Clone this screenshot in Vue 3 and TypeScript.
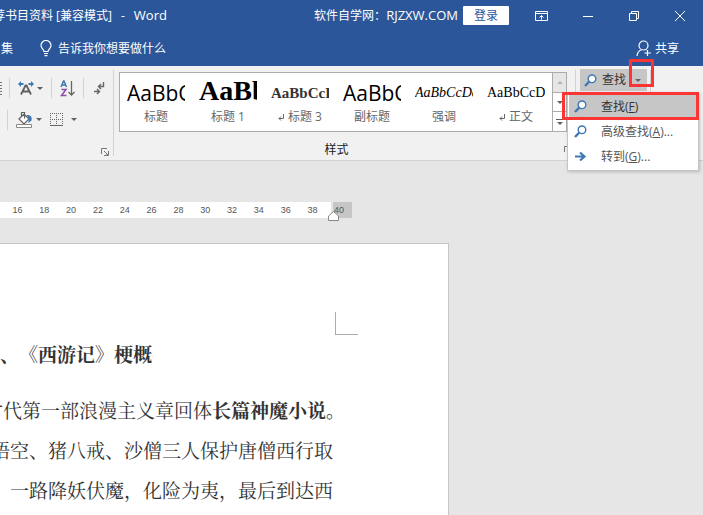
<script setup lang="ts">
interface StyleItem {
  sample: string
  label: string
  kind: string
  linked?: boolean
}

const styleItems: StyleItem[] = [
  { sample: 'AaBbC', label: '标题', kind: 'title' },
  { sample: 'AaBb', label: '标题 1', kind: 'heading1' },
  { sample: 'AaBbCcD', label: '标题 3', kind: 'heading3', linked: true },
  { sample: 'AaBbC', label: '副标题', kind: 'title' },
  { sample: 'AaBbCcDd', label: '强调', kind: 'emphasis' },
  { sample: 'AaBbCcDd', label: '正文', kind: 'normal', linked: true },
]

const rulerMarks: number[] = Array.from({ length: 12 }, (_, i) => 16 + i * 2)

const menuItems = [
  { text: '查找', key: 'F', tail: '', icon: 'search', active: true },
  { text: '高级查找', key: 'A', tail: '...', icon: 'search', active: false },
  { text: '转到', key: 'G', tail: '...', icon: 'arrow', active: false },
]
</script>

<template>
  <div class="word">
    <header class="titlebar">
      <div class="doc-title">
        <span>荐书目资料 [兼容模式]</span><span>-</span><span class="latin">Word</span>
      </div>
      <span class="brand">软件自学网：<span class="latin">RJZXW.COM</span></span>
      <button class="login" type="button">登录</button>
      <div class="window-buttons">
        <button type="button" aria-label="功能区显示选项">
          <svg width="14" height="12" viewBox="0 0 14 12" fill="none" stroke="#fff">
            <path d="M.5 1.500h12v9H.5zM.5 3.500h12M6.500 9.500v-4M4.500 7.500l2-2 2 2" />
          </svg>
        </button>
        <button type="button" aria-label="最小化">
          <svg width="12" height="12" viewBox="0 0 12 12" stroke="#fff"><path d="M1 6.500h10" /></svg>
        </button>
        <button type="button" aria-label="还原">
          <svg width="12" height="12" viewBox="0 0 12 12" fill="none" stroke="#fff">
            <path d="M1.500 3.500h7v7h-7zM3.500 3.500v-2h7v7h-2" />
          </svg>
        </button>
        <button type="button" aria-label="关闭">
          <svg width="12" height="12" viewBox="0 0 12 12" stroke="#fff"><path d="M1 1l10 10M11 1L1 11" /></svg>
        </button>
      </div>
    </header>

    <nav class="tabs">
      <a class="tab" href="#">集</a>
      <button class="tell" type="button">
        <svg width="12" height="17" viewBox="0 0 12 17" fill="none" stroke="#fff" stroke-width="1.2">
          <path d="M4 11.500C4 9.500 1 8.500 1 5.500a5 5 0 0 1 10 0c0 3-3 4-3 6zM4 13.500h4M4.500 15.600h3" />
        </svg>
        <span>告诉我你想要做什么</span>
      </button>
      <button class="share" type="button">
        <svg width="16" height="17" viewBox="0 0 16 17" fill="none" stroke="#fff" stroke-width="1.200">
          <circle cx="7.500" cy="5.500" r="4.500" />
          <path d="M1 16c.3-3 2-5.500 4.500-6.300M9.500 9.500l1 .5M11.500 10v6M8.500 13h6.500" />
        </svg>
        <span>共享</span>
      </button>
    </nav>

    <section class="ribbon">
      <div class="paragraph-group">
        <div class="tool-row first">
          <svg class="lines" width="2" height="14" viewBox="0 0 2 14" stroke="#777">
            <path d="M0 1.500h2M0 4.500h2M0 7.500h2M0 10.500h2M0 13.500h2" />
          </svg>
          <i class="bar"></i>
          <button class="tool" type="button" aria-label="中文版式">
            <svg width="16" height="14" viewBox="0 0 16 14" fill="none">
              <path d="M3 13.500l4.500-9h1l4.500 9M5 10.500h6" stroke="#606060" stroke-width="1.800" />
              <path d="M0 3l3-3v2h2.500v2H3v2zM16 3l-3-3v2h-2.500v2H13v2z" fill="#3e78b5" />
            </svg>
            <i class="caret"></i>
          </button>
          <i class="bar"></i>
          <button class="tool" type="button" aria-label="排序">
            <svg width="15" height="17" viewBox="0 0 15 17" fill="none">
              <path d="M1 7l2.500-6h.5L6.500 7M2 5h3.500" stroke="#3e78b5" stroke-width="1.400" />
              <path d="M1.500 9.500H6l-4.500 6h5" stroke="#8c4fa8" stroke-width="1.500" />
              <path d="M11.500 1v14M8.500 12l3 3 3-3" stroke="#666" stroke-width="1.300" />
            </svg>
          </button>
          <i class="bar"></i>
          <button class="tool marks" type="button" aria-label="显示编辑标记">
            <svg width="11" height="13" viewBox="0 0 11 13" fill="none" stroke="#666" stroke-width="1.400">
              <path d="M9.500 0v4.500H5M7 2L4.500 4.500 7 7M0 9.500h5M3 7l2.500 2.500L3 12" />
            </svg>
          </button>
        </div>
        <div class="tool-row second">
          <i class="bar"></i>
          <button class="tool" type="button" aria-label="底纹">
            <svg width="17" height="17" viewBox="0 0 17 17" fill="none">
              <path d="M3 8l5-5 5 5-5 5zM5.500 5.500V1.500h3v6" fill="#fff" stroke="#606060" stroke-width="1.200" />
              <path d="M10.500 4c4-.5 6 2 5 5.500L12.500 12V7z" fill="#3e78b5" />
              <path d="M.5 13.500h15v3H.5z" fill="#fff" stroke="#888" />
            </svg>
            <i class="caret"></i>
          </button>
          <button class="tool borders" type="button" aria-label="边框">
            <svg width="13" height="14" viewBox="0 0 13 14" fill="none" stroke="#666">
              <path d="M0 .5h13M0 6.500h13M.5 0v12M6.500 0v12M12.500 0v12" stroke-dasharray="1 1" />
              <path d="M0 12.500h13" />
            </svg>
            <i class="caret"></i>
          </button>
        </div>
        <button class="launcher" type="button" aria-label="段落设置">
          <svg width="8" height="8" viewBox="0 0 8 8" fill="none" stroke="#777">
            <path d="M.5 6V.5H6M3 3l3 3M7.500 3v4.500H3M5.500 6.500h2" />
          </svg>
        </button>
      </div>

      <div class="styles-group">
        <div class="gallery">
          <button v-for="item in styleItems" :key="item.label" class="style-item" type="button">
            <span class="sample" :class="item.kind">{{ item.sample }}</span>
            <span class="style-label">
              <svg v-if="item.linked" width="6" height="7" viewBox="0 0 6 7" fill="none" stroke="#666">
                <path d="M5.500 0v4.500H1M3 2.500l-2 2 2 2" />
              </svg>
              {{ item.label }}
            </span>
          </button>
          <div class="gallery-scroll">
            <button type="button" class="off" aria-label="上一行"><i class="caret up"></i></button>
            <button type="button" aria-label="下一行"><i class="caret"></i></button>
            <button type="button" aria-label="其他"><i class="more"></i><i class="caret"></i></button>
          </div>
        </div>
        <div class="group-foot">
          <span class="group-name">样式</span>
          <button class="launcher" type="button" aria-label="样式设置">
            <svg width="8" height="8" viewBox="0 0 8 8" fill="none" stroke="#777">
              <path d="M.5 6V.5H6M3 3l3 3M7.500 3v4.500H3" />
            </svg>
          </button>
        </div>
      </div>

      <div class="edit-group">
        <button class="find" type="button">
          <svg width="13" height="13" viewBox="0 0 13 13" fill="none" stroke="#3e78b5">
            <circle cx="8" cy="4.800" r="3.800" fill="#fff" stroke-width="1.400" />
            <path d="M5.300 7.500L1 12" stroke-width="2.400" />
          </svg>
          <span>查找</span>
          <i class="caret"></i>
        </button>
        <div class="menu" role="menu">
          <button
            v-for="entry in menuItems"
            :key="entry.key"
            class="menu-item"
            :class="{ active: entry.active }"
            type="button"
            role="menuitem"
          >
            <svg v-if="entry.icon === 'search'" width="13" height="13" viewBox="0 0 13 13" fill="none" stroke="#3e78b5">
              <circle cx="8" cy="4.800" r="3.800" fill="#fff" stroke-width="1.400" />
              <path d="M5.300 7.500L1 12" stroke-width="2.400" />
            </svg>
            <svg v-else width="13" height="13" viewBox="0 0 13 13" fill="none" stroke="#3e78b5" stroke-width="2.200">
              <path d="M1 6.500h9.500M6 2.500l4.500 4L6 10.500" />
            </svg>
            <span>{{ entry.text }}(<u>{{ entry.key }}</u>){{ entry.tail }}</span>
          </button>
        </div>
        <div class="mark mark-arrow"></div>
        <div class="mark mark-item"></div>
      </div>
    </section>

    <main class="workspace">
      <div class="ruler">
        <div class="scale">
          <span v-for="n in rulerMarks" :key="n">{{ n }}</span>
        </div>
        <div class="outside">
          <span>40</span>
          <svg class="indent" width="11" height="10" viewBox="0 0 11 10">
            <path d="M.5 9.500v-4.500l5-4.500 5 4.500v4.500z" fill="#fff" stroke="#888" />
          </svg>
        </div>
      </div>
      <article class="page">
        <div class="corner"></div>
        <h1>、《西游记》梗概</h1>
        <div class="text">
          <p class="hang"><span>时代第一部浪漫主义章回体<b>长篇神魔小说。</b></span></p>
          <p><span>悟空、猪八戒、沙僧三人保护唐僧西行取</span></p>
          <p><span>一路降妖伏魔，化险为夷，最后到达西</span></p>
        </div>
      </article>
    </main>
  </div>
</template>

<style>
body {
  margin: 0;
}
</style>

<style scoped>
* {
  box-sizing: border-box;
}
.word {
  display: flex;
  flex-direction: column;
  height: 100vh;
  overflow: hidden;
  background: #e6e6e6;
  color: #555;
  font: 12px/18px "Open Sans", "Noto Sans CJK SC", sans-serif;
  text-spacing-trim: space-all;
}
button {
  display: flex;
  align-items: center;
  margin: 0;
  padding: 0;
  border: 0;
  background: none;
  color: inherit;
  font: inherit;
  white-space: nowrap;
}
svg {
  display: block;
  flex: none;
}
.titlebar {
  display: flex;
  flex: none;
  align-items: center;
  height: 31px;
  background: #2b579a;
  color: #fff;
  white-space: nowrap;
}
.doc-title {
  display: flex;
  flex: 1;
  align-items: baseline;
  gap: 9px;
  margin-left: -7px;
}
.latin {
  font-size: 13px;
  line-height: 16px;
}
.brand {
  margin-right: 5px;
}
.login {
  justify-content: center;
  width: 46px;
  height: 19px;
  margin-right: 10px;
  border-radius: 1px;
  background: #fff;
  color: #2b579a;
}
.window-buttons {
  display: flex;
}
.window-buttons button {
  justify-content: center;
  width: 46px;
  height: 30px;
}
.tabs {
  display: flex;
  flex: none;
  align-items: center;
  height: 35px;
  background: #2b579a;
  color: #fff;
}
.tab {
  margin: 0 27px 0 1px;
  color: inherit;
  text-decoration: none;
}
.tell {
  gap: 6px;
}
.share {
  gap: 3px;
  margin: 0 24px 0 auto;
}
.ribbon {
  position: relative;
  z-index: 1;
  display: flex;
  flex: none;
  height: 95px;
  border-bottom: 1px solid #d2d2d2;
  background: #f1f1f1;
}
.paragraph-group {
  display: flex;
  flex: none;
  flex-direction: column;
  width: 114px;
  margin: 4px 5px 4px 0;
  border-right: 1px solid #d2d2d2;
}
.tool-row {
  display: flex;
  align-items: center;
  height: 27px;
  gap: 8px;
}
.tool-row.first {
  height: 36px;
}
.lines {
  margin-right: -1px;
}
.bar {
  width: 1px;
  height: 20px;
  background: #d2d2d2;
}
.tool-row.second {
  padding-left: 7px;
}
.tool {
  gap: 3px;
}
.marks {
  padding-left: 2px;
}
.borders {
  gap: 8px;
}
.caret {
  width: 0;
  height: 0;
  border: 3px solid transparent;
  border-top-color: #606060;
  border-bottom: 0;
}
.caret.up {
  border-top: 0;
  border-bottom: 3px solid #b5b5b5;
}
.launcher {
  margin: auto 4px 0 auto;
}
.styles-group {
  display: flex;
  flex: 1;
  flex-direction: column;
  min-width: 0;
  padding: 6px 0 1px;
}
.gallery {
  display: flex;
  height: 60px;
  border: 1px solid #ababab;
  background: #fff;
}
.style-item {
  flex: 1;
  flex-direction: column;
  min-width: 0;
  padding: 5px 7px 0;
}
.sample {
  width: 100%;
  height: 30px;
  overflow: hidden;
  color: #000;
  text-align: left;
}
.title {
  font: 21px/30px "Open Sans", "Noto Sans", sans-serif;
}
.heading1 {
  font: bold 28px/26px "Liberation Serif", serif;
}
.heading3 {
  color: #333;
  font: bold 15px/30px "Liberation Serif", serif;
}
.emphasis {
  font: italic 14px/30px "Liberation Serif", serif;
}
.normal {
  font: 14px/30px "Liberation Serif", serif;
}
.style-label {
  display: flex;
  align-items: center;
  gap: 4px;
  color: #666;
}
.gallery-scroll {
  display: flex;
  flex: none;
  flex-direction: column;
  width: 14px;
  border-left: 1px solid #ababab;
}
.gallery-scroll button {
  flex: 1;
  flex-direction: column;
  justify-content: center;
  gap: 2px;
}
.gallery-scroll button + button {
  border-top: 1px solid #ababab;
}
.gallery-scroll .off {
  background: #e6e6e6;
}
.more {
  width: 7px;
  height: 1px;
  background: #606060;
}
.group-foot {
  display: flex;
  flex: 1;
  align-items: center;
  padding-top: 8px;
}
.group-name {
  flex: 1;
  padding-right: 18px;
  color: #222;
  text-align: center;
}
.group-foot .launcher {
  width: 8px;
  margin: 0 -5px 0 -8px;
}
.edit-group {
  position: relative;
  flex: none;
  width: 76px;
  margin: 4px 52px 4px 8px;
  border: solid #d2d2d2;
  border-width: 0 1px;
}
.find {
  width: 67px;
  height: 22px;
  margin: -1px 0 0 4px;
  padding-left: 4px;
  background: #c6c6c6;
  color: #333;
}
.find span {
  margin: 0 9px 0 5px;
}
.menu {
  position: absolute;
  top: 22px;
  left: -9px;
  width: 132px;
  padding: 1px;
  border: 1px solid #c6c6c6;
  background: #fff;
  box-shadow: 1px 1px 3px #0003;
}
.menu-item {
  gap: 14px;
  width: 100%;
  height: 25px;
  padding-left: 5px;
}
.menu-item.active {
  background: #c6c6c6;
  color: #333;
}
.mark {
  position: absolute;
  border: 3px solid #fb3434;
  pointer-events: none;
}
.mark-arrow {
  top: -11px;
  left: 53px;
  width: 25px;
  height: 28px;
}
.mark-item {
  top: 22px;
  left: -14px;
  width: 137px;
  height: 28px;
}
.workspace {
  display: flex;
  flex: 1;
  flex-direction: column;
  min-height: 0;
  padding-top: 41px;
}
.ruler {
  display: flex;
  flex: none;
  height: 16px;
  margin-right: 351px;
  font: 9px/17px "Liberation Sans", sans-serif;
  text-align: center;
}
.scale {
  display: flex;
  flex: 1;
  margin-right: 2px;
  padding: 0 5px 0 4px;
  background: #fff;
}
.scale span {
  flex: 1;
}
.outside {
  position: relative;
  width: 19px;
  padding-right: 7px;
  background: #c6c6c6;
}
.indent {
  position: absolute;
  top: 9px;
  left: -5px;
}
.page {
  flex: 1;
  min-height: 0;
  margin: 25px 254px 0 0;
  padding-top: 68px;
  overflow: hidden;
  border: solid #c6c6c6;
  border-width: 1px 1px 0 0;
  background: #fff;
  color: #333;
  font-size: 19px;
  line-height: 40px;
  white-space: nowrap;
}
.page,
.page h1 {
  font-family: "Noto Serif CJK SC", "Noto Sans CJK SC", serif;
}
.corner {
  width: 23px;
  height: 23px;
  margin: 0 90px 0 auto;
  border: solid #ababab;
  border-width: 0 0 1px 1px;
}
.page h1 {
  margin: 0 0 17px;
  font-size: 19px;
  line-height: 38px;
}
.text {
  padding-right: 115px;
}
.text p {
  display: flex;
  justify-content: flex-end;
  margin: 0;
}
.text .hang {
  margin-right: -12px;
}
</style>
